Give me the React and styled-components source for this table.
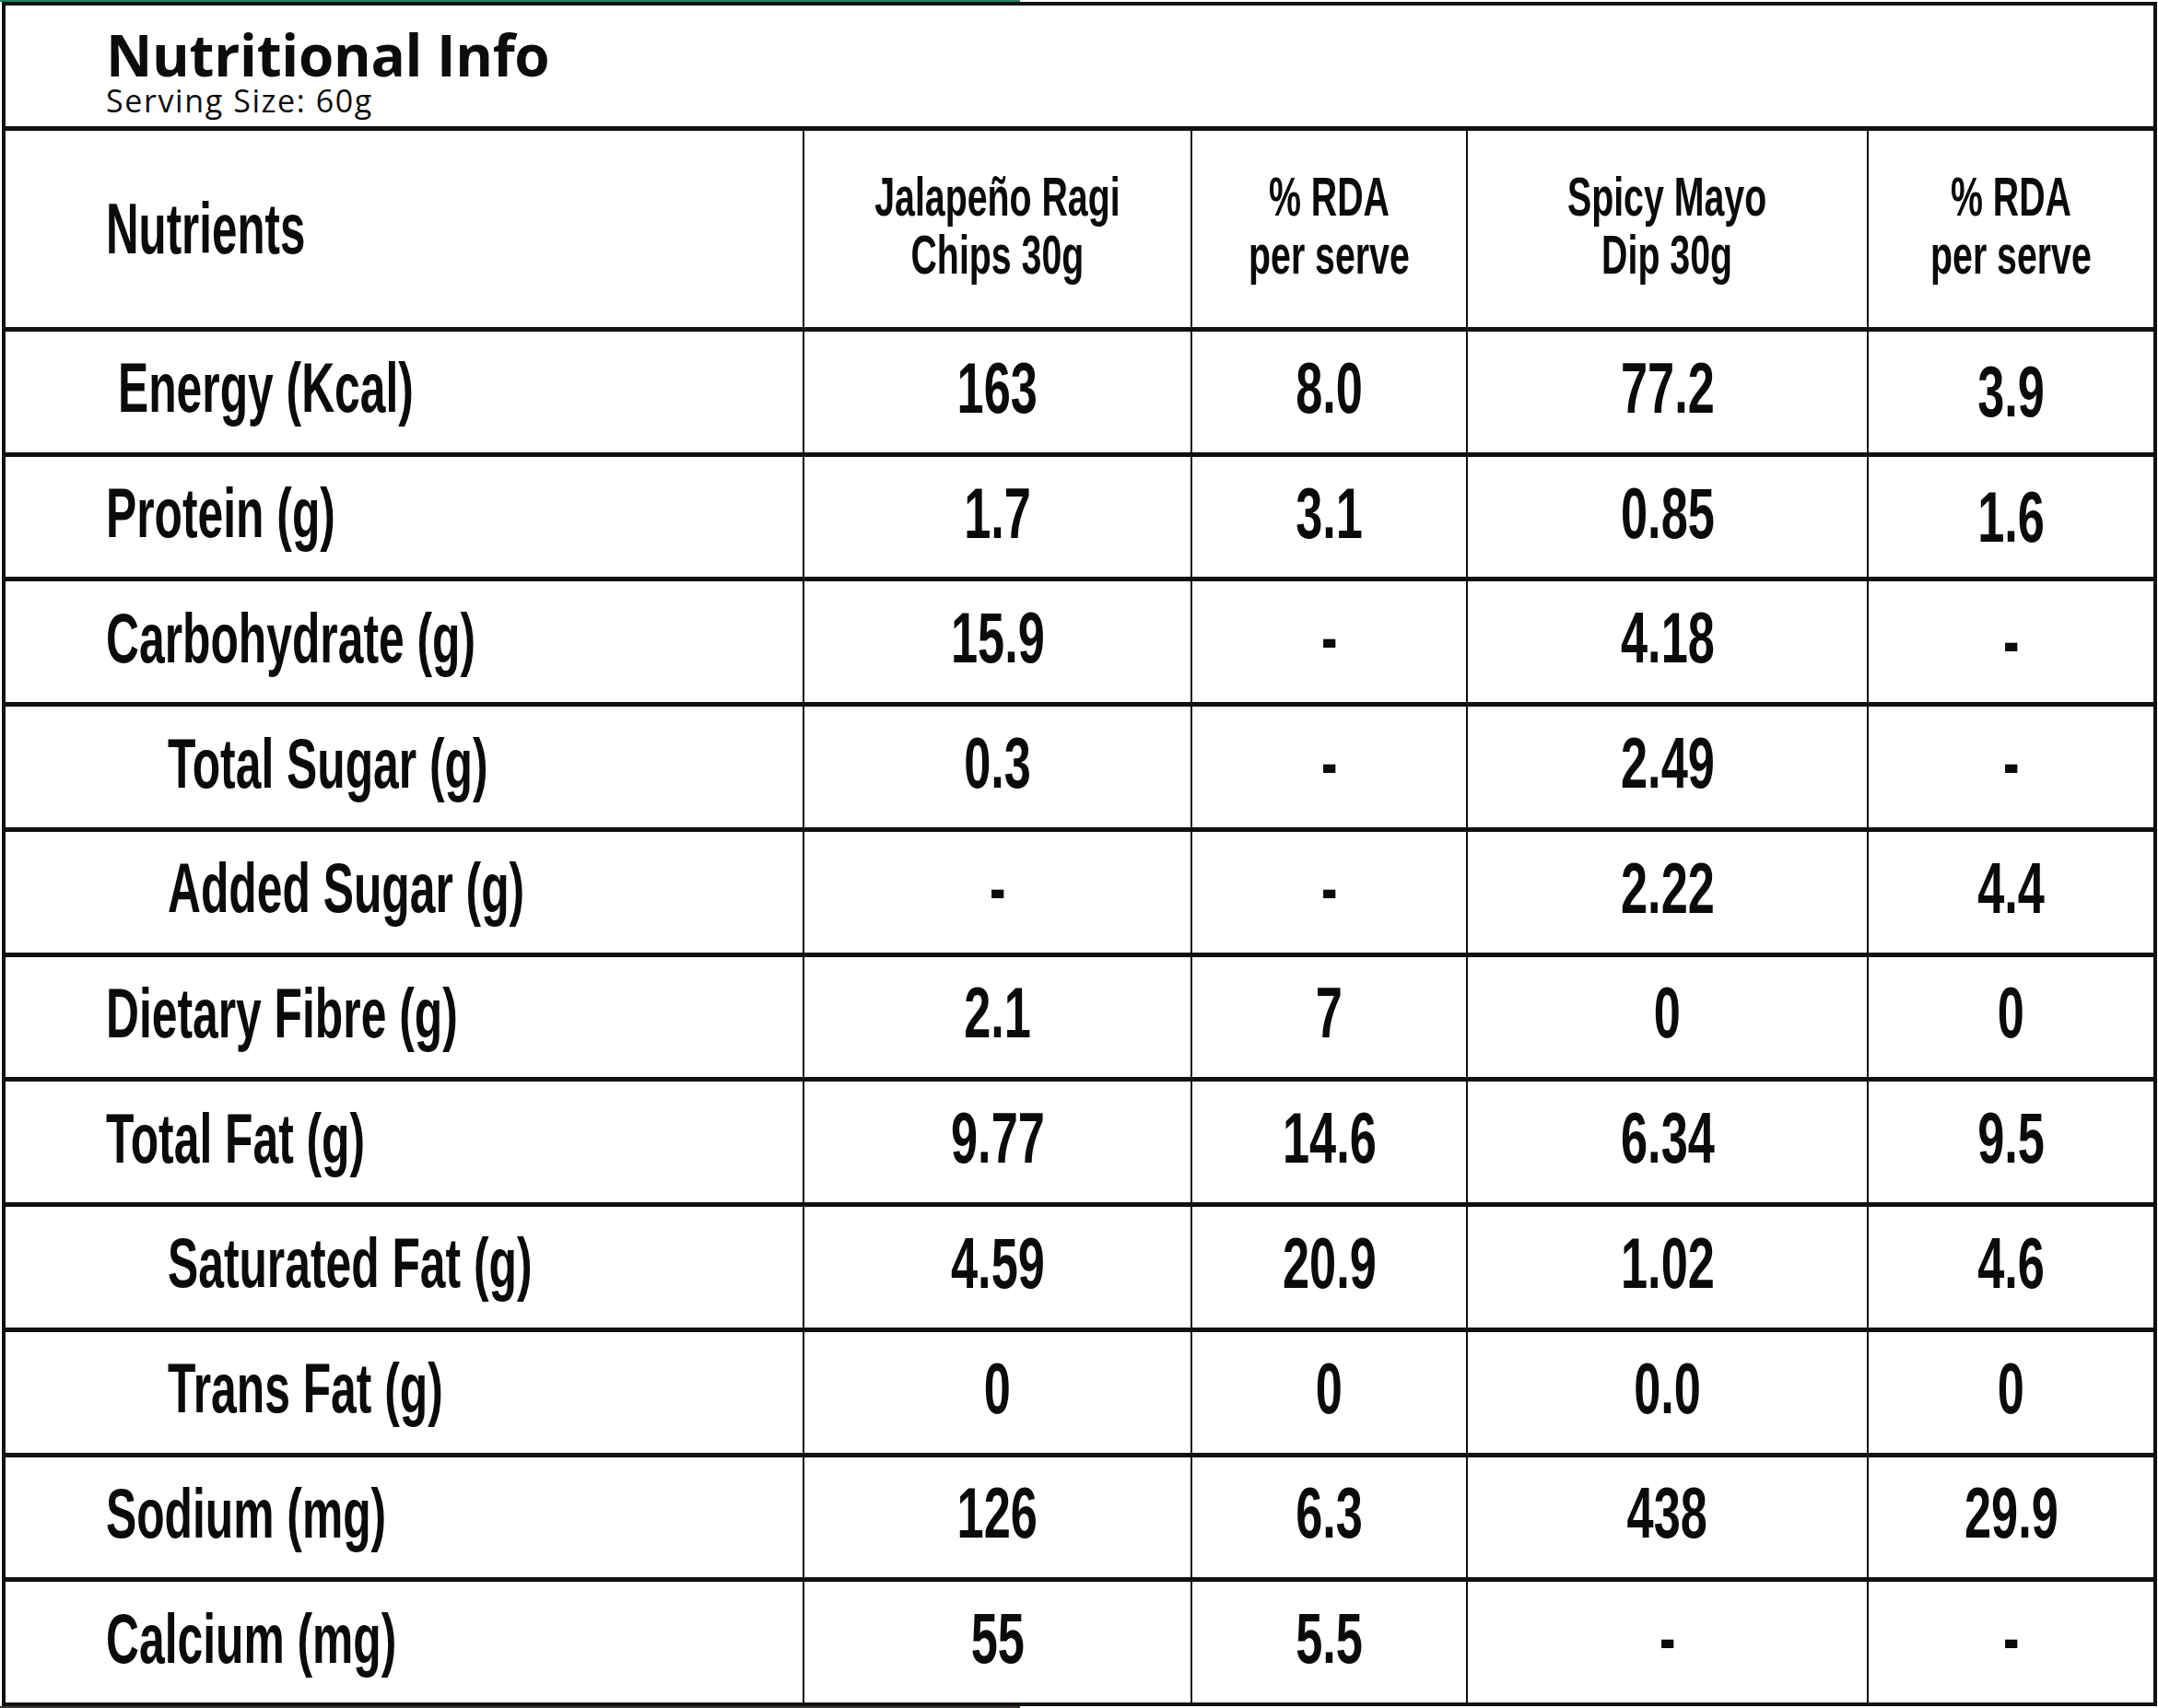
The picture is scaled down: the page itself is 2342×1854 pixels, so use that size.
import styled, { createGlobalStyle } from "styled-components";

const GlobalStyle = createGlobalStyle`
  html, body {
    margin: 0;
    padding: 0;
    background: #ffffff;
  }
  body {
    width: 2342px;
    height: 1854px;
    overflow: hidden;
  }
`;

const Page = styled.div`
  width: 2342px;
  height: 1854px;
  display: flex;
  flex-direction: column;
`;

const Strip = styled.div`
  flex: none;
  height: 2px;
  background: linear-gradient(to right, ${(p) => p.$color} 0 1107px, #ffffff 1107px);
`;

const Table = styled.div`
  flex: none;
  margin-left: 2px;
  width: 2339px;
  height: 1850px;
  box-sizing: border-box;
  border: 4px solid #111111;
  background: #111111;
  display: grid;
  grid-template-columns: 865px 419px 297px 433px 309px;
  grid-template-rows: 131px 213px repeat(11, 1fr);
  column-gap: 2px;
  row-gap: 5px;
`;

const TitleCell = styled.div`
  grid-column: 1 / -1;
  background: #ffffff;
  padding: 20px 0 0 109px;
  display: flex;
  flex-direction: column;
  color: #0c0c0c;
`;

const Title = styled.h1`
  margin: 0;
  font-family: "Open Sans", "Liberation Sans", sans-serif;
  font-weight: 700;
  font-size: 62px;
  line-height: 66px;
  letter-spacing: -0.3px;
`;

const Serving = styled.div`
  margin-top: 0;
  font-family: "Open Sans", "Liberation Sans", sans-serif;
  font-weight: 400;
  font-size: 34px;
  line-height: 34px;
  letter-spacing: 1.6px;
`;

const Cell = styled.div`
  background: #ffffff;
  display: flex;
  align-items: center;
  justify-content: ${(p) => (p.$center ? "center" : "flex-start")};
  padding-left: ${(p) => p.$indent || 0}px;
  padding-top: ${(p) => (p.$drop || 0) * 2}px;
  padding-bottom: ${(p) => p.$lift || 0}px;
  min-width: 0;
  overflow: hidden;
`;

// condensed look: Liberation Sans bold squeezed horizontally
const Cond = styled.span`
  display: inline-block;
  font-family: "Liberation Sans", Arial, sans-serif;
  font-weight: 700;
  line-height: 1;
  color: #0b0b0b;
  white-space: nowrap;
`;

const HeadLabel = styled(Cond)`
  font-size: 77px;
  transform: scaleX(0.64);
  transform-origin: left center;
`;

const ColHead = styled(Cond)`
  font-size: 60px;
  line-height: 63px;
  text-align: center;
  transform: scaleX(0.655);
  transform-origin: center;
`;

const Label = styled(Cond)`
  font-size: 76px;
  transform: scaleX(0.655);
  transform-origin: left center;
`;

const Value = styled(Cond)`
  font-size: 77px;
  transform: scaleX(0.68);
  transform-origin: center;
`;

const columns = [
  ["Jalapeño Ragi", "Chips 30g"],
  ["% RDA", "per serve"],
  ["Spicy Mayo", "Dip 30g"],
  ["% RDA", "per serve"],
];

const rows = [
  { label: "Energy (Kcal)", indent: 122, values: ["163", "8.0", "77.2", "3.9"], drop: [0, 0, 0, 4] },
  { label: "Protein (g)", indent: 109, values: ["1.7", "3.1", "0.85", "1.6"], drop: [0, 0, 0, 4] },
  { label: "Carbohydrate (g)", indent: 109, values: ["15.9", "-", "4.18", "-"], drop: [0, 0, 0, 4] },
  { label: "Total Sugar (g)", indent: 176, values: ["0.3", "-", "2.49", "-"] },
  { label: "Added Sugar (g)", indent: 176, values: ["-", "-", "2.22", "4.4"] },
  { label: "Dietary Fibre (g)", indent: 109, values: ["2.1", "7", "0", "0"] },
  { label: "Total Fat (g)", indent: 109, values: ["9.77", "14.6", "6.34", "9.5"] },
  { label: "Saturated Fat (g)", indent: 176, values: ["4.59", "20.9", "1.02", "4.6"] },
  { label: "Trans Fat (g)", indent: 176, values: ["0", "0", "0.0", "0"] },
  { label: "Sodium (mg)", indent: 109, values: ["126", "6.3", "438", "29.9"] },
  { label: "Calcium (mg)", indent: 109, values: ["55", "5.5", "-", "-"] },
];

const App = () => {
  return (
    <Page>
      <GlobalStyle />
      <Strip $color="#23826a" />
      <Table>
        <TitleCell>
          <Title>Nutritional Info</Title>
          <Serving>Serving Size: 60g</Serving>
        </TitleCell>

        <Cell $indent={109}>
          <HeadLabel>Nutrients</HeadLabel>
        </Cell>
        {columns.map((lines, i) => (
          <Cell key={i} $center $lift={8}>
            <ColHead>
              {lines[0]}
              <br />
              {lines[1]}
            </ColHead>
          </Cell>
        ))}

        {rows.map((row) => [
          <Cell key={row.label} $indent={row.indent} $lift={8}>
            <Label>{row.label}</Label>
          </Cell>,
          ...row.values.map((v, i) => (
            <Cell key={row.label + i} $center $lift={8} $drop={row.drop ? row.drop[i] : 0}>
              <Value>{v}</Value>
            </Cell>
          )),
        ])}
      </Table>
      <Strip $color="#3b3a2c" />
    </Page>
  );
};

export default App;
